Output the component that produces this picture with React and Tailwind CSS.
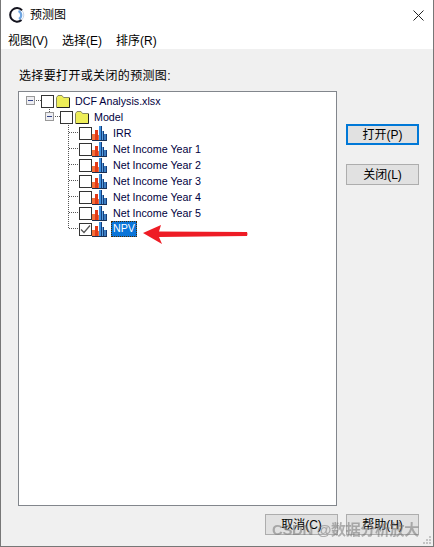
import React from 'react';

const FONT = { fontFamily: '"Liberation Sans", "Noto Sans CJK SC", sans-serif' };

const Folder = () => (
  <svg width="14" height="13" viewBox="0 0 14 13" className="shrink-0 block">
    <path d="M.5 12.5V2.500L2 .5h4l1.500 2h6v10z" fill="#eeee58" stroke="#8a8a60" />
    <path d="M13.500 3v9.500H1" fill="none" stroke="#222" />
  </svg>
);

const ChartIcon = () => (
  <svg width="15" height="16" viewBox="0 0 15 16" className="shrink-0">
    <rect x="0" y="9" width="3" height="6" fill="#f4703a" />
    <rect x="3" y="5" width="3" height="10" fill="#e23a18" />
    <rect x="6" y="10" width="1" height="5" fill="#f07040" />
    <rect x="7" y="1" width="2" height="14" fill="#3c90e0" />
    <rect x="9" y="1" width="1" height="14" fill="#143c78" />
    <rect x="10" y="6" width="1" height="9" fill="#5aa0e0" />
    <rect x="11" y="6" width="1" height="9" fill="#143c78" />
    <rect x="12" y="9" width="2" height="6" fill="#3c7cc0" />
    <rect x="14" y="9" width="1" height="6" fill="#143c78" />
    <rect x="0" y="15" width="15" height="1" fill="#1c2f50" />
  </svg>
);

const Checkbox = ({ checked }) => (
  <span className="w-[13px] h-[13px] border border-[#333] bg-white shrink-0 flex items-center justify-center">
    {checked && (
      <svg width="11" height="11" viewBox="0 0 11 11">
        <path d="M1 5.500l3 3 6-7" fill="none" stroke="#555" strokeWidth="1.2" />
      </svg>
    )}
  </span>
);

// expander box with the dotted stub to the checkbox
const Expander = ({ stub }) => (
  <svg width="15" height="16" viewBox="0 0 15 16" className="shrink-0">
    {stub && <path d="M4.500 0v3" stroke="#555" strokeDasharray="1 1" />}
    <rect x=".5" y="3.500" width="8" height="8" fill="#eeeef2" stroke="#999" />
    <path d="M2 7.500h5" stroke="#334488" />
    <path d="M10 7.500h5" stroke="#555" strokeDasharray="1 1" />
  </svg>
);

const Row = ({ indent, children }) => (
  <div className={`flex items-center h-4 ${indent}`}>{children}</div>
);

const CHARTS = ['IRR', 'Net Income Year 1', 'Net Income Year 2', 'Net Income Year 3', 'Net Income Year 4', 'Net Income Year 5'];

const ChartRow = ({ label, checked, last }) => (
  <div className="flex items-center h-4 pl-[49px] text-[#000040]">
    <svg width="11" height="16" viewBox="0 0 11 16" className="shrink-0">
      <path d={last ? 'M.5 0v7.500' : 'M.5 0v16'} stroke="#555" strokeDasharray="1 1" />
      <path d="M1 7.500h10" stroke="#555" strokeDasharray="1 1" />
    </svg>
    <Checkbox checked={checked} />
    <ChartIcon />
    {checked ? (
      <span className="ml-1 px-[2px] h-4 leading-[15px] bg-[#0a74d8] text-white outline-1 outline-dotted outline-[#4a2a00] -outline-offset-1">{label}</span>
    ) : (
      <span className="ml-[6px]">{label}</span>
    )}
  </div>
);

const Button = ({ label, mnemonic, primary }) => (
  <button
    className={`w-[73px] h-[21px] bg-[#e1e1e1] text-[12px] text-black flex items-center justify-center ${primary ? 'border-2 border-[#0078d7]' : 'border border-[#adadad]'}`}
  >
    {label}({mnemonic})
  </button>
);

export default function App() {
  return (
    <div style={FONT} className="relative w-[434px] h-[547px] flex flex-col bg-[#f0f0f0] border border-t-0 border-[#777] overflow-hidden text-[12px] text-black">
      <div className="bg-white h-[30px] flex items-center pl-2 pr-[9px] shrink-0">
        <svg width="16" height="16" viewBox="0 0 16 16" className="shrink-0">
          <circle cx="8" cy="8" r="6.800" fill="none" stroke="#c8d4e4" strokeWidth="1" />
          <path d="M13 3.300A6.800 6.800 0 1 0 12.500 13" fill="none" stroke="#14141f" strokeWidth="2" />
          <path d="M9.500 4a4.500 4.500 0 0 1 .5 8" fill="none" stroke="#6fa6e2" strokeWidth="2.200" />
        </svg>
        <span className="ml-[5px] text-[12px]">预测图</span>
        <svg width="11" height="11" viewBox="0 0 11 11" className="ml-auto">
          <path d="M.5.5l10 10M10.500.5l-10 10" stroke="#222" />
        </svg>
      </div>
      <div className="bg-white h-[19px] pt-[2px] flex items-center gap-[14px] pl-[7px] shrink-0">
        <span>视图(V)</span>
        <span>选择(E)</span>
        <span>排序(R)</span>
      </div>

      <div className="flex-1 flex flex-col pl-[17px] pr-[14px] pt-[19px] pb-[11px] min-h-0">
        <div className="h-[23px] leading-4 pl-px tracking-[0.35px]">选择要打开或关闭的预测图:</div>
        <div className="flex flex-1 min-h-0">
          <div className="w-[320px] h-[415px] bg-white border border-[#82868c] pt-px text-[10.7px]">
            <Row indent="pl-[7px]">
              <Expander />
              <Checkbox />
              <span className="ml-[2px]"><Folder /></span>
              <span className="ml-[5px] text-[#000040]">DCF Analysis.xlsx</span>
            </Row>
            <Row indent="pl-[26px]">
              <Expander stub />
              <Checkbox />
              <span className="ml-[2px]"><Folder /></span>
              <span className="ml-[5px] text-[#000040]">Model</span>
            </Row>
            {CHARTS.map((c) => (
              <ChartRow key={c} label={c} />
            ))}
            <ChartRow label="NPV" checked last />
          </div>
          <div className="flex flex-col gap-[19px] pl-[9px] pt-[33px]">
            <Button label="打开" mnemonic="P" primary />
            <Button label="关闭" mnemonic="L" />
          </div>
        </div>
        <div className="flex justify-end gap-2 mt-auto">
          <Button label="取消" mnemonic="C" />
          <Button label="帮助" mnemonic="H" />
        </div>
      </div>

      {/* red annotation arrow */}
      <svg width="110" height="24" viewBox="0 0 110 24" className="absolute left-[140px] top-[222px]">
        <path d="M2 11L20 3l-2 6.500 88 .5q1 2 0 4L18 15l3 7z" fill="#ee1c25" />
      </svg>

      {/* watermark */}
      <div className="absolute left-[271px] top-[519px] text-[15px] text-[#777]/55 whitespace-nowrap font-bold tracking-tight blur-[0.7px]">CSDN @数据分析放大</div>

      {/* resize grip */}
      <svg width="10" height="10" viewBox="0 0 10 10" className="absolute right-px bottom-px">
        <path d="M7 1h2v2H7zM4 4h2v2H4zM7 4h2v2H7zM1 7h2v2H1zM4 7h2v2H4zM7 7h2v2H7z" fill="#c4c4c4" />
      </svg>
    </div>
  );
}
